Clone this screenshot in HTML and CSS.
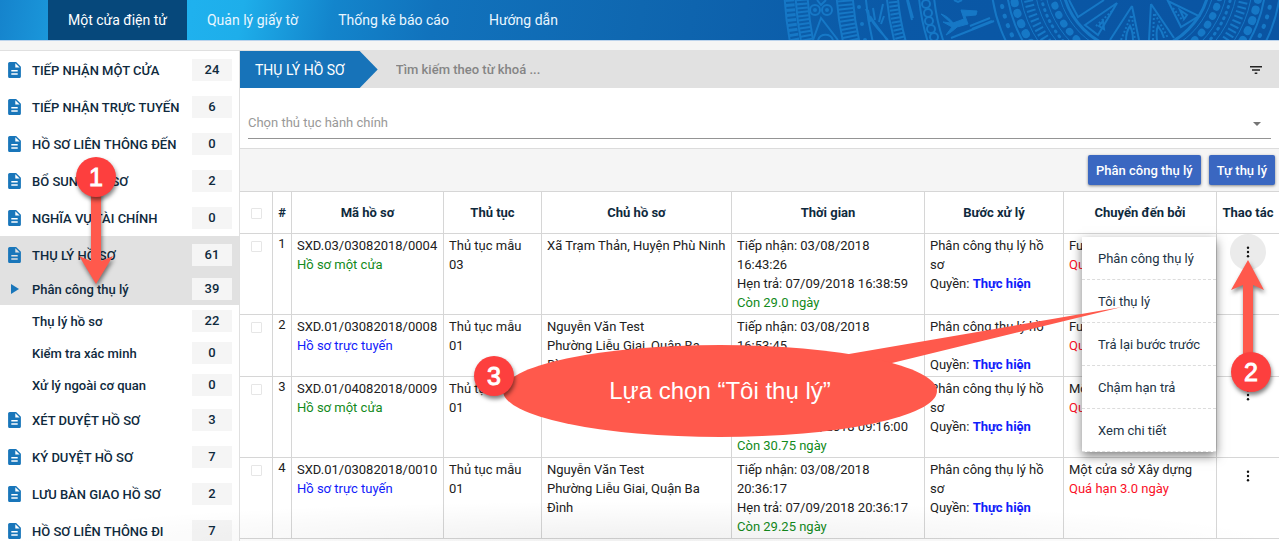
FILE: index.html
```html
<!DOCTYPE html>
<html lang="vi">
<head>
<meta charset="utf-8">
<title>Một cửa điện tử</title>
<link rel="stylesheet" href="styles.css">
</head>
<body>
<svg class="defs" width="0" height="0" aria-hidden="true">
  <symbol id="doc" viewBox="4 2 16 20"><path d="M14 2H6c-1.100 0-2 .9-2 2v16c0 1.100.9 2 2 2h12c1.100 0 2-.9 2-2V8l-6-6zm2 16H8v-2h8v2zm0-4H8v-2h8v2zm-3-5V3.500L18.500 9H13z"/></symbol>
  <symbol id="dots" viewBox="0 0 4 12"><circle cx="2" cy="1.700" r="1.200"/><circle cx="2" cy="6" r="1.200"/><circle cx="2" cy="10.300" r="1.200"/></symbol>
</svg>

<header class="topbar">
  <svg class="drum" width="500" height="40" viewBox="779 0 500 40" fill="none" stroke="#1678c6" aria-hidden="true">
    <g stroke-width="2">
      <circle cx="1136" cy="-23" r="352"/>
      <circle cx="1136" cy="-23" r="341"/>
      <circle cx="1136" cy="-23" r="329"/>
      <circle cx="1136" cy="-23" r="300"/>
      <circle cx="1136" cy="-23" r="284"/>
      <circle cx="1136" cy="-23" r="271"/>
      <circle cx="1136" cy="-23" r="250"/>
      <circle cx="1136" cy="-23" r="239"/>
      <circle cx="1136" cy="-23" r="218"/>
      <circle cx="1136" cy="-23" r="203"/>
    </g>
    <circle cx="1136" cy="-23" r="347" stroke-width="9" stroke-dasharray="3 2"/>
    <circle cx="1136" cy="-23" r="335" stroke-width="11" stroke-dasharray="2 2"/>
    <circle cx="1136" cy="-23" r="292" stroke-width="15" stroke-dasharray="2 2"/>
    <circle cx="1136" cy="-23" r="244" stroke-width="9" stroke-dasharray="2 2"/>
    <g stroke-width="2">
      <circle cx="815" cy="10" r="5"/><circle cx="827" cy="10" r="5"/>
      <circle cx="815" cy="10" r="1"/><circle cx="827" cy="10" r="1"/>
      <path d="M817 0l4 5 5-5M813 40l8-22 17 22M818 40a8 8 0 0 1 15 0"/>
      <path d="M866 9c4 12 12 20 22 31M870 16c6 10 12 16 17 24M870 22l-2-12M875 20l-2-12M879 22l4-18M881 24l3-8M907 0l5 20M908 0l5 18"/>
      <circle cx="926" cy="4" r="4"/><circle cx="928" cy="13" r="4"/><circle cx="929" cy="21" r="4"/><circle cx="931" cy="29" r="4"/><circle cx="934" cy="37" r="4"/>
    </g>
    <path fill="#1678c6" d="M941 14c6 2 10 6 12 9l11-4-3-9 16 1-1 4-11 1 3 8-11 3c-3 3-7 6-11 8l6-8-9-5 8 1z"/>
    <path stroke-width="2" d="M951 38l43-17M970 26l20-8M972 29l20-8M954 0l4 2 4-2"/>
    <g fill="#1678c6" stroke="none"><circle cx="859" cy="7" r="2"/><circle cx="862" cy="24" r="2"/><circle cx="865" cy="40" r="2"/></g>
    <g stroke-width="1">
      <circle cx="1136" cy="-23" r="145" stroke-width="2"/>
      <circle cx="1136" cy="-23" r="137" stroke-width="4" stroke-linecap="round" stroke-dasharray="1 9"/>
      <circle cx="1136" cy="-23" r="130" stroke-width="2"/>
      <circle cx="1136" cy="-23" r="124" stroke-width="8" stroke-linecap="round" stroke-dasharray="1 10"/>
      <circle cx="1136" cy="-23" r="117"/>
      <circle cx="1136" cy="-23" r="110" stroke-width="9" stroke-dasharray="2 3"/>
      <circle cx="1136" cy="-23" r="102"/>
      <circle cx="1136" cy="-23" r="97" stroke-width="3" stroke-linecap="round" stroke-dasharray="1 5"/>
      <circle cx="1136" cy="-23" r="92"/>
      <circle cx="1136" cy="-23" r="86" stroke-width="7" stroke-linecap="round" stroke-dasharray="1 9"/>
      <circle cx="1136" cy="-23" r="79"/>
      <circle cx="1136" cy="-23" r="74" stroke-width="3"/>
    </g>
    <g stroke-width="2">
      <path d="M1117 3l-32 22 13 10zM1132 6l-22 34M1132 6l7 34M1151 4l-2 36M1151 4l23 34M1168 1l13 26 18-11zM1069 0l9 17 26-17"/>
      <path d="M1112 11l-17 16M1131 16l-10 24M1132 16l3 24M1154 14l-1 26M1155 14l13 24M1173 8l10 13" stroke-dasharray="2 2"/>
      <path d="M1126 40c0-9 3-12 4-14 2 4 3 8 3 14M1157 40c-1-8 0-12 1-14 3 4 5 8 6 12M1099 26l4-5 1 8zM1180 10l7 5-3 4z"/>
    </g>
  </svg>
  <nav class="topnav">
    <a class="topnav-link is-active" href="#">Một cửa điện tử</a>
    <a class="topnav-link" href="#">Quản lý giấy tờ</a>
    <a class="topnav-link" href="#">Thống kê báo cáo</a>
    <a class="topnav-link" href="#">Hướng dẫn</a>
  </nav>
</header>

<div class="layout">
  <nav class="sidebar">
    <a class="side-item" href="#"><svg class="doc"><use href="#doc"/></svg><span class="side-label">TIẾP NHẬN MỘT CỬA</span><span class="count">24</span></a>
    <a class="side-item" href="#"><svg class="doc"><use href="#doc"/></svg><span class="side-label">TIẾP NHẬN TRỰC TUYẾN</span><span class="count">6</span></a>
    <a class="side-item" href="#"><svg class="doc"><use href="#doc"/></svg><span class="side-label">HỒ SƠ LIÊN THÔNG ĐẾN</span><span class="count">0</span></a>
    <a class="side-item" href="#"><svg class="doc"><use href="#doc"/></svg><span class="side-label">BỔ SUNG HỒ SƠ</span><span class="count">2</span></a>
    <a class="side-item" href="#"><svg class="doc"><use href="#doc"/></svg><span class="side-label">NGHĨA VỤ TÀI CHÍNH</span><span class="count">0</span></a>
    <a class="side-item is-active" href="#"><svg class="doc"><use href="#doc"/></svg><span class="side-label">THỤ LÝ HỒ SƠ</span><span class="count">61</span></a>
    <a class="side-item sub is-active" href="#"><svg class="play" viewBox="0 0 8 10"><path d="M0 0l8 5-8 5z"/></svg><span class="side-label">Phân công thụ lý</span><span class="count">39</span></a>
    <a class="side-item sub" href="#"><span class="side-label">Thụ lý hồ sơ</span><span class="count">22</span></a>
    <a class="side-item sub" href="#"><span class="side-label">Kiểm tra xác minh</span><span class="count">0</span></a>
    <a class="side-item sub" href="#"><span class="side-label">Xử lý ngoài cơ quan</span><span class="count">0</span></a>
    <a class="side-item" href="#"><svg class="doc"><use href="#doc"/></svg><span class="side-label">XÉT DUYỆT HỒ SƠ</span><span class="count">3</span></a>
    <a class="side-item" href="#"><svg class="doc"><use href="#doc"/></svg><span class="side-label">KÝ DUYỆT HỒ SƠ</span><span class="count">7</span></a>
    <a class="side-item" href="#"><svg class="doc"><use href="#doc"/></svg><span class="side-label">LƯU BÀN GIAO HỒ SƠ</span><span class="count">2</span></a>
    <a class="side-item" href="#"><svg class="doc"><use href="#doc"/></svg><span class="side-label">HỒ SƠ LIÊN THÔNG ĐI</span><span class="count">7</span></a>
  </nav>

  <main class="main">
    <div class="searchbar">
      <h1 class="crumb">THỤ LÝ HỒ SƠ</h1>
      <input class="search" type="text" placeholder="Tìm kiếm theo từ khoá ..." aria-label="Tìm kiếm theo từ khoá">
      <button class="filter" type="button" aria-label="Bộ lọc"><svg width="12" height="8" viewBox="0 0 12 8"><path d="M0 0h12v1.500H0zM2 3.200h8v1.500H2zM4.700 6.500h2.600V8H4.700z"/></svg></button>
    </div>
    <div class="picker">
      <select class="procedure" aria-label="Chọn thủ tục hành chính"><option>Chọn thủ tục hành chính</option></select>
      <svg class="caret" width="8" height="4" viewBox="0 0 8 4"><path d="M0 0h8L4 4z"/></svg>
    </div>
    <div class="actions">
      <button class="btn" type="button">Phân công thụ lý</button>
      <button class="btn" type="button">Tự thụ lý</button>
    </div>
    <table class="records">
      <colgroup><col class="c-check"><col class="c-num"><col class="c-code"><col class="c-proc"><col class="c-owner"><col class="c-time"><col class="c-step"><col class="c-from"><col class="c-act"></colgroup>
      <thead>
        <tr><th><input class="check" type="checkbox" aria-label="Chọn tất cả"></th><th>#</th><th>Mã hồ sơ</th><th>Thủ tục</th><th>Chủ hồ sơ</th><th>Thời gian</th><th>Bước xử lý</th><th>Chuyển đến bởi</th><th>Thao tác</th></tr>
      </thead>
      <tbody>
        <tr>
          <td class="pick"><input class="check" type="checkbox" aria-label="Chọn hồ sơ 1"></td><td class="num">1</td>
          <td>SXD.03/03082018/0004<br><span class="green">Hồ sơ một cửa</span></td>
          <td>Thủ tục mẫu 03</td><td>Xã Trạm Thản, Huyện Phù Ninh</td>
          <td>Tiếp nhận: 03/08/2018 16:43:26<br>Hẹn trả: 07/09/2018 16:38:59<br><span class="green">Còn 29.0 ngày</span></td>
          <td>Phân công thụ lý hồ sơ<br>Quyền: <b class="role">Thực hiện</b></td>
          <td>Full<br><span class="red">Quá hạn</span></td>
          <td class="act"><button class="more is-open" type="button" aria-label="Thao tác"><svg class="dots"><use href="#dots"/></svg></button>
            <div class="menu">
              <button class="menu-item" type="button">Phân công thụ lý</button>
              <button class="menu-item" type="button">Tôi thụ lý</button>
              <button class="menu-item" type="button">Trả lại bước trước</button>
              <button class="menu-item" type="button">Chậm hạn trả</button>
              <button class="menu-item" type="button">Xem chi tiết</button>
            </div>
          </td>
        </tr>
        <tr>
          <td class="pick"><input class="check" type="checkbox" aria-label="Chọn hồ sơ 2"></td><td class="num">2</td>
          <td>SXD.01/03082018/0008<br><span class="blue">Hồ sơ trực tuyến</span></td>
          <td>Thủ tục mẫu 01</td><td>Nguyễn Văn Test<br>Phường Liễu Giai, Quận Ba Đình</td>
          <td>Tiếp nhận: 03/08/2018 16:53:45</td>
          <td>Phân công thụ lý hồ sơ<br>Quyền: <b class="role">Thực hiện</b></td>
          <td>Full<br><span class="red">Quá hạn</span></td>
          <td class="act"><button class="more" type="button" aria-label="Thao tác"><svg class="dots"><use href="#dots"/></svg></button></td>
        </tr>
        <tr>
          <td class="pick"><input class="check" type="checkbox" aria-label="Chọn hồ sơ 3"></td><td class="num">3</td>
          <td>SXD.01/04082018/0009<br><span class="green">Hồ sơ một cửa</span></td>
          <td>Thủ tục mẫu 01</td><td></td>
          <td>Tiếp nhận: 04/08/2018 09:16:00<br>Hẹn trả: 10/09/2018 09:16:00<br><span class="green">Còn 30.75 ngày</span></td>
          <td>Phân công thụ lý hồ sơ<br>Quyền: <b class="role">Thực hiện</b></td>
          <td>Một cửa<br><span class="red">Quá hạn</span></td>
          <td class="act"><button class="more" type="button" aria-label="Thao tác"><svg class="dots"><use href="#dots"/></svg></button></td>
        </tr>
        <tr>
          <td class="pick"><input class="check" type="checkbox" aria-label="Chọn hồ sơ 4"></td><td class="num">4</td>
          <td>SXD.01/03082018/0010<br><span class="blue">Hồ sơ trực tuyến</span></td>
          <td>Thủ tục mẫu 01</td><td>Nguyễn Văn Test<br>Phường Liễu Giai, Quận Ba Đình</td>
          <td>Tiếp nhận: 03/08/2018 20:36:17<br>Hẹn trả: 07/09/2018 20:36:17<br><span class="green">Còn 29.25 ngày</span></td>
          <td>Phân công thụ lý hồ sơ<br>Quyền: <b class="role">Thực hiện</b></td>
          <td>Một cửa sở Xây dựng<br><span class="red">Quá hạn 3.0 ngày</span></td>
          <td class="act"><button class="more" type="button" aria-label="Thao tác"><svg class="dots"><use href="#dots"/></svg></button></td>
        </tr>
      </tbody>
    </table>
  </main>
</div>

<div class="fade"></div>

<svg class="notes" width="1279" height="541" viewBox="0 0 1279 541">
  <g fill="#ff594c">
    <path class="lift" d="M91 190h10v71l12-5-17 28-17-28 12 5z"/>
    <path class="lift" d="M1243 360V285l-12 5 17-30 16 30-11-5v75z"/>
    <path d="M849 354L1122 307 892 363 900 380 820 380z"/>
    <ellipse cx="720" cy="391" rx="217" ry="46"/>
  </g>
  <g class="lift" fill="#fd3f3e">
    <circle cx="96" cy="177" r="20"/>
    <circle cx="1251" cy="372" r="20"/>
    <circle cx="494" cy="376" r="20"/>
  </g>
  <g class="step-text">
    <text x="96" y="186">1</text>
    <text x="1251" y="381">2</text>
    <text x="494" y="385">3</text>
  </g>
  <text class="callout-text" x="720" y="399">Lựa chọn “Tôi thụ lý”</text>
</svg>
</body>
</html>
```
FILE: styles.css
```css
* { box-sizing: border-box; }

body {
  display: flex;
  flex-direction: column;
  margin: 0;
  height: 100vh;
  overflow: hidden;
  position: relative;
  background: #f5f5f5;
  color: #212121;
  font: 13px/19px Roboto, "Noto Sans", sans-serif;
}

a { color: inherit; text-decoration: none; }
button, input, select { font: inherit; color: inherit; border: 0; margin: 0; padding: 0; background: none; }
.defs { position: absolute; }

.topbar {
  flex: none;
  position: relative;
  height: 41px;
  border-bottom: 1px solid #bcd3ec;
  background: linear-gradient(100deg, #1583cc 0, #1d9fe0 6%, #1fb1ee 15%, #1eaeea 19%, #1385cc 26%, #1172bc 34%, #0f67b0 50%, #0a58a6 70%, #0a54a2 100%);
}
.drum { position: absolute; right: 0; top: 0; }
.topnav { position: relative; display: flex; height: 40px; padding-left: 48px; }
.topnav-link { padding: 0 20px; color: #e9f6ff; font-size: 14px; line-height: 40px; }
.topnav-link.is-active { background: #06487b; color: #fff; }

.layout { display: flex; flex: 1; min-height: 0; margin-top: 9px; overflow: hidden; }

.sidebar {
  flex: 0 0 240px;
  overflow: hidden;
  border-top: 1px solid #e0e0e0;
  border-right: 1px solid #e0e0e0;
  background: #fff;
}
.side-item {
  display: flex;
  align-items: center;
  height: 37px;
  padding: 1px 7px 0 8px;
  color: #0f2a3d;
  font-weight: 500;
}
.side-item.sub { height: 32px; padding-top: 0; }
.side-item.is-active { background: #e1e1e1; }
.doc { flex: none; width: 13px; height: 16px; margin-right: 11px; fill: #1976ba; }
.play { flex: none; width: 8px; height: 10px; margin: 0 13px 0 3px; fill: #1976ba; }
.side-label { flex: 1; white-space: nowrap; }
.sub .side-label:first-child { margin-left: 24px; }
.count { flex: none; width: 40px; background: #f5f5f5; line-height: 22px; text-align: center; }

.main { flex: 1; min-width: 0; overflow: hidden; background: #fff; }

.searchbar { display: flex; height: 38px; padding-top: 1px; background: #e1e1e1; }
.crumb {
  margin: 0;
  padding: 0 33px 0 15px;
  background: #1773b9;
  clip-path: polygon(0 0, calc(100% - 18px) 0, 100% 50%, calc(100% - 18px) 100%, 0 100%);
  color: #fff;
  font-size: 14px;
  font-weight: 400;
  line-height: 38px;
}
.search { flex: 1; padding-left: 18px; outline: 0; font-weight: 500; }
.search::placeholder { color: #858585; opacity: 1; }
.filter { display: flex; align-items: center; padding: 0 17px; fill: #222; }

.picker { position: relative; height: 61px; padding: 18px 8px 0; border-bottom: 1px solid #dcdcdc; }
.procedure {
  appearance: none;
  width: 100%;
  height: 33px;
  border-bottom: 1px solid #949494;
  border-radius: 0;
  color: #999;
}
.caret { position: absolute; right: 18px; top: 34px; fill: #757575; }

.actions { display: flex; justify-content: flex-end; gap: 8px; height: 42px; padding: 6px 4px; background: #f5f5f5; }
.btn {
  height: 30px;
  padding: 0 8px;
  border-radius: 2px;
  background: #3a67c1;
  box-shadow: 0 1px 3px rgba(0, 0, 0, .45);
  color: #fff;
  font-weight: 500;
}

.records { width: 100%; border-collapse: separate; border-spacing: 0; table-layout: fixed; border-top: 1px solid #d6d6d6; }
.c-check { width: 33px; }
.c-num { width: 19px; }
.c-code { width: 152px; }
.c-proc { width: 98px; }
.c-time { width: 193px; }
.c-step { width: 139px; }
.c-from { width: 153px; }
.c-act { width: 62px; }
.records th { height: 42px; padding: 0; border: solid #d6d6d6; border-width: 0 1px 1px 0; color: #0f2a3d; font-weight: 700; vertical-align: middle; }
.records td { padding: 2px 4px 2px 5px; border: solid #d6d6d6; border-width: 0 1px 1px 0; vertical-align: top; }
.records th:last-child, .records td:last-child { border-right: 0; }
.records td.num, .records td.pick { padding: 0; text-align: center; }
.check { appearance: none; display: block; width: 11px; height: 11px; margin: 2px auto 0; border: 1px solid #e6e6e6; border-radius: 1px; }
.pick .check { margin-top: 7px; }
.green { color: #128a1b; }
.blue { color: #1020fa; }
.red { color: #fa1028; }
.role { color: #1020fa; }

.records td.act { position: relative; padding: 0; }
.more { display: flex; align-items: center; justify-content: center; width: 36px; height: 36px; margin: 0 auto; border-radius: 50%; }
.more.is-open { background: #ebebeb; }
.dots { width: 4px; height: 12px; fill: #111; }
.menu {
  position: absolute;
  z-index: 2;
  top: 3px;
  right: calc(100% + 1px);
  width: 134px;
  background: #fff;
  box-shadow: 0 4px 10px rgba(0, 0, 0, .5);
}
.menu-item { display: block; width: 100%; height: 43px; padding-left: 16px; border-bottom: 1px dashed #dcdcdc; color: #1c3345; text-align: left; white-space: nowrap; }

.fade { position: absolute; left: 0; right: 0; bottom: 0; height: 40px; background: radial-gradient(ellipse 50% 100% at 50% 100%, rgba(0, 0, 0, .06), rgba(0, 0, 0, 0)); }
.notes { position: absolute; z-index: 3; left: 0; top: 0; pointer-events: none; }
.lift { filter: drop-shadow(1px 3px 2px rgba(0, 0, 0, .5)); }
.step-text { font: 25px "Liberation Sans", Arial, sans-serif; fill: #fff; stroke: #fff; stroke-width: 1px; text-anchor: middle; }
.callout-text { font: 24px "Liberation Sans", Arial, sans-serif; fill: #fff; text-anchor: middle; }
```
